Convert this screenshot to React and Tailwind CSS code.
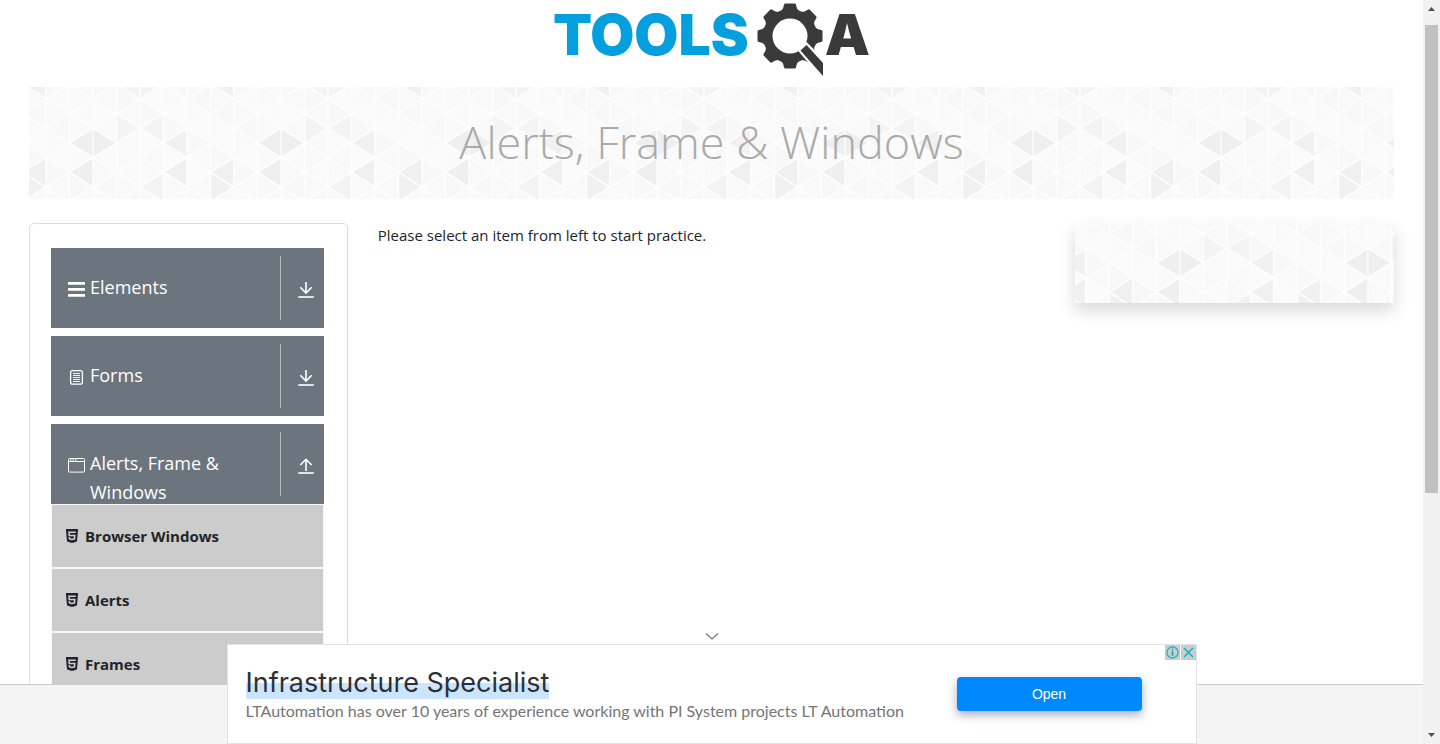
import React from "react";

const COL = 23.5;
const HALF = 14.7;

// Shades of the triangles that stand out, keyed by "column:row".
const SHADES = {
  "7:0": "#efefef", "0:0": "#efefef", "7:2": "#efefef", "3:0": "#f1f1f1",
  "3:2": "#f0f0f0", "5:2": "#f0f0f0", "5:3": "#f1f1f1", "2:3": "#f3f3f3",
  "1:-1": "#f4f4f4", "2:-1": "#f4f4f4", "5:-4": "#f1f1f1", "2:-4": "#f4f4f4",
  "1:-4": "#f4f4f4", "6:-4": "#f8f8f8",
};
const BASE = ["#f9f9f9", "#fbfbfb", "#f8f8f8", "#fafafa", "#f9f9f9"];

function triangles() {
  const out = [];
  for (let k = 0; k < 8; k++) {
    for (let r = -5; r <= 5; r++) {
      const left = (k + r) % 2 !== 0;
      const x0 = k * COL;
      const x1 = x0 + COL;
      const y = r * HALF;
      const points = left
        ? `${x0},${y} ${x1},${y - HALF} ${x1},${y + HALF}`
        : `${x1},${y} ${x0},${y - HALF} ${x0},${y + HALF}`;
      const fill = SHADES[`${k}:${r}`] || BASE[(k * 3 + (r + 5) * 2 + (left ? 1 : 0)) % 5];
      out.push(<polygon key={`${k}:${r}`} points={points} fill={fill} />);
    }
  }
  return out;
}

function TrianglePattern({ id }) {
  return (
    <svg className="absolute inset-0 h-full w-full" aria-hidden="true">
      <defs>
        <pattern id={id} x="-54.5" y="-74" width="188" height="148" patternUnits="userSpaceOnUse">
          <g transform="translate(0 74)" stroke="#fefefe" strokeWidth="1.4" strokeLinejoin="round">
            {triangles()}
          </g>
        </pattern>
      </defs>
      <svg x="50%" y="50%" className="overflow-visible">
        <rect x="-2000" y="-74" width="4000" height="148" fill={`url(#${id})`} />
      </svg>
    </svg>
  );
}

function Gear() {
  const teeth = [0, 45, 90, 135, 180, 225, 270, 315];
  return (
    <svg viewBox="0 0 68 74" className="h-[74px] w-[68px]" aria-hidden="true">
      <g fill="#3a3a3a">
        {teeth.map((a) => (
          <path key={a} d="M24 8 L26 5.500 L27 1.800 Q27.300 0.500 28.500 0.500 H37.500 Q38.700 0.500 39 1.800 L40 5.500 L42 8 Z" transform={`rotate(${a} 33 33)`} />
        ))}
        <path fillRule="evenodd" d="M33 6a27 27 0 1 0 0 54a27 27 0 1 0 0-54zM33 15.500a17.500 17.500 0 1 1 0 35a17.500 17.500 0 1 1 0-35z" />
      </g>
      <path d="M40.500 47 L49.500 39 L68 57.500 V80 Z" fill="#ffffff" />
      <path d="M43.500 47.500 L49.500 42 L66 60 V73 Z" fill="#3a3a3a" />
    </svg>
  );
}

function BarsIcon() {
  return (
    <svg viewBox="0 0 18 16" className="h-4 w-[18px]" fill="#fff" aria-hidden="true">
      <rect x="1" y="1" width="17" height="2.800" rx="0.500" />
      <rect x="1" y="7" width="17" height="2.800" rx="0.500" />
      <rect x="1" y="13" width="17" height="2.800" rx="0.500" />
    </svg>
  );
}

function FormIcon() {
  return (
    <svg viewBox="0 0 18 16" className="h-4 w-[18px]" fill="none" stroke="#fff" aria-hidden="true">
      <rect x="3.600" y="1.600" width="11.800" height="13.600" rx="2" strokeWidth="1.300" />
      <path d="M6 4.500h7M6 6.500h7M6 8.500h7M6 10.500h7M6 12.500h7" strokeWidth="0.900" />
    </svg>
  );
}

function WindowIcon() {
  return (
    <svg viewBox="0 0 18 16" className="h-4 w-[18px]" fill="none" stroke="#fff" aria-hidden="true">
      <rect x="1.500" y="1.500" width="16" height="13.600" rx="1" strokeWidth="1" />
      <path d="M1.500 4.500h16" />
      <path d="M3 2.900h1.500M5.500 2.900h1.500M8 2.900h1.500" strokeWidth="1.200" />
    </svg>
  );
}

function ArrowIcon({ up }) {
  return (
    <svg viewBox="0 0 16 16" className="h-4 w-4" fill="none" stroke="#fff" strokeWidth="1.600" aria-hidden="true">
      {up ? <path d="M8 13V1.200M2.300 7L8 1.300L13.700 7" /> : <path d="M8 0V11M2.300 5.300L8 11L13.700 5.300" />}
      <path d="M0.300 15h15.400" />
    </svg>
  );
}

function Html5Icon() {
  return (
    <svg viewBox="0 0 24 24" className="h-[14px] w-[14px]" fill="#212529" aria-hidden="true">
      <path d="M1.500 0h21l-1.910 21.563L11.977 24l-8.564-2.438L1.500 0zm7.031 9.750l-.232-2.718 10.059.003.230-2.622L5.412 4.410l.698 8.010h9.126l-.326 3.426-2.910.804-2.955-.810-.188-2.110H6.248l.330 4.171L12 19.351l5.379-1.443.744-8.157H8.531z" />
    </svg>
  );
}

function Group({ icon, label, open }) {
  return (
    <button type="button" className="flex h-20 w-full items-start overflow-hidden bg-[#6c757d] pl-4 text-left text-white">
      <span className="mt-[33px] shrink-0">{icon}</span>
      <span className="mt-[25px] ml-[5px] flex-1 text-[18px] leading-[29px]">{label}</span>
      <span className="mt-2 flex h-16 w-11 shrink-0 items-center justify-center border-l border-[#bdbdbd] pt-1 pl-2">
        <ArrowIcon up={open} />
      </span>
    </button>
  );
}

function Item({ label }) {
  return (
    <li>
      <a href="#" className="flex h-16 items-center border border-[#f8f8f8] bg-[#ccc] pl-[13px] text-[15px] font-bold text-[#212529]">
        <Html5Icon />
        <span className="ml-[6px]">{label}</span>
      </a>
    </li>
  );
}

function Scrollbar() {
  return (
    <div className="flex w-[17px] shrink-0 flex-col items-center justify-between bg-[#f1f1f1]" aria-hidden="true">
      <svg viewBox="0 0 17 17" className="h-[17px] w-[17px]"><path d="M5 11h7L8.500 7z" fill="#505050" /></svg>
      <div className="flex w-[13px] flex-1 flex-col pt-2">
        <div className="h-2/3 bg-[#c1c1c1]" />
      </div>
      <svg viewBox="0 0 17 17" className="h-[17px] w-[17px]"><path d="M5 6h7L8.500 10z" fill="#505050" /></svg>
    </div>
  );
}

function Ad() {
  return (
    <aside className="absolute inset-x-0 bottom-0 flex h-[60px] items-end justify-center border-t border-[#ccc] bg-[#f4f4f4]">
      <div className="flex w-full max-w-[970px] flex-col">
        <button type="button" aria-label="Collapse" className="flex h-4 w-6 items-center justify-center self-center">
          <svg viewBox="0 0 14 8" className="h-2 w-[14px]" fill="none" stroke="#757575" strokeWidth="1.200"><path d="M1 1.500l6 5.500L13 1.500" /></svg>
        </button>
        <div className="relative flex h-[100px] items-center border border-[#e3e3e3] bg-white pl-[18px]">
          <div className="flex-1 pt-[2px]">
            <h2 className="font-['Inter',sans-serif] text-[27px] leading-8 text-[#2b3036]">
              <span className="bg-linear-to-b from-transparent from-50% to-[#cce5ff] to-50%">Infrastructure Specialist</span>
            </h2>
            <p className="font-['Lato',sans-serif] text-[16px] leading-6 text-[#757575]">
              LTAutomation has over 10 years of experience working with PI System projects LT Automation
            </p>
          </div>
          <button type="button" className="mr-[54px] h-[34px] w-[185px] rounded bg-[#0088ff] font-['Liberation_Sans',sans-serif] text-[14px] text-white shadow-[0_4px_10px_rgba(40,50,90,0.4)]">
            Open
          </button>
          <div className="absolute top-0 right-0 flex gap-px">
            <button type="button" aria-label="Ad information" className="h-[15px] w-[15px] bg-[#ccc]">
              <svg viewBox="0 0 15 15" fill="none" stroke="#00aecd"><circle cx="7.500" cy="7.500" r="5.600" strokeWidth="1.100" /><path d="M7.500 6.300v4.500M7.500 3.800v1.500" strokeWidth="1.700" /></svg>
            </button>
            <button type="button" aria-label="Close ad" className="h-[15px] w-[15px] bg-[#ccc]">
              <svg viewBox="0 0 15 15" stroke="#00aecd" strokeWidth="1.300"><path d="M3 3l9 9M12 3l-9 9" /></svg>
            </button>
          </div>
        </div>
      </div>
    </aside>
  );
}

export default function App() {
  return (
    <div className="flex h-screen overflow-hidden bg-white font-['Open_Sans','Noto_Sans',sans-serif] text-[#212529]">
      <div className="relative min-w-0 flex-1 overflow-hidden px-[29px]">
        <header className="flex h-[87px] justify-center pt-[3px]">
          <a href="#" aria-label="TOOLSQA" className="flex items-start font-['Inter',sans-serif] text-[57px] leading-[64px] font-black">
            <span className="text-[#069fdd]">TOOLS</span>
            <span className="ml-2"><Gear /></span>
            <span className="text-[#3a3a3a]">A</span>
          </a>
        </header>
        <div className="relative flex h-28 items-center justify-center overflow-hidden">
          <TrianglePattern id="banner-pattern" />
          <h1 className="relative pb-[2px] text-[45px] font-light text-[#aaa]">Alerts, Frame &amp; Windows</h1>
        </div>
        <main className="mt-6 grid grid-cols-4 items-start gap-[30px]">
          <nav className="rounded-[5px] border border-[#ddd] pt-6 pr-[23px] pb-6 pl-[21px]">
            <div className="flex flex-col gap-2">
              <Group icon={<BarsIcon />} label="Elements" />
              <Group icon={<FormIcon />} label="Forms" />
              <div>
                <Group icon={<WindowIcon />} label="Alerts, Frame & Windows" open />
                <ul>
                  <Item label="Browser Windows" />
                  <Item label="Alerts" />
                  <Item label="Frames" />
                  <Item label="Nested Frames" />
                </ul>
              </div>
            </div>
          </nav>
          <p className="col-span-2 text-[15px] leading-6">Please select an item from left to start practice.</p>
          <div className="relative h-20 shadow-[0_8px_16px_rgba(0,0,0,0.15)]">
            <TrianglePattern id="card-pattern" />
          </div>
        </main>
        <Ad />
      </div>
      <Scrollbar />
    </div>
  );
}
